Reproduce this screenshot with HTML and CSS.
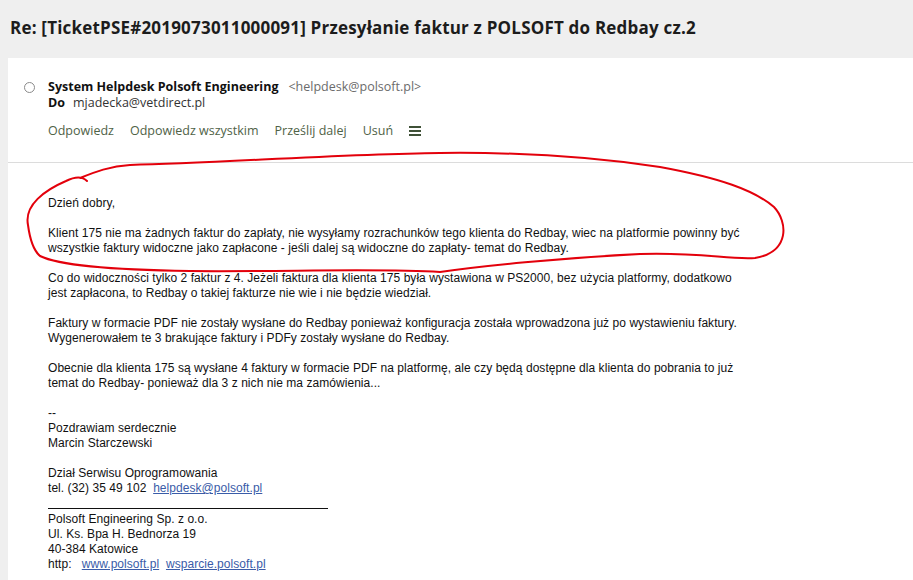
FILE: index.html
```html
<!DOCTYPE html>
<html lang="pl">
<head>
    <meta charset="UTF-8">
    <title>Przesyłanie faktur z POLSOFT do Redbay cz.2</title>
    <link rel="stylesheet" href="styles.css">
</head>
<body>
    <div class="subject">Re: [TicketPSE#2019073011000091] Przesyłanie faktur z POLSOFT do Redbay cz.2</div>

    <div class="message">
        <div class="msg-head">
            <div class="sender">
                <span class="radio"></span>
                <div class="sender-info">
                    <div class="from"><b>System Helpdesk Polsoft Engineering</b><span class="addr">&lt;helpdesk@polsoft.pl&gt;</span></div>
                    <div class="to"><b>Do</b><span>mjadecka@vetdirect.pl</span></div>
                </div>
            </div>
            <div class="actions">
                <a>Odpowiedz</a>
                <a>Odpowiedz wszystkim</a>
                <a>Prześlij dalej</a>
                <a>Usuń</a>
                <span class="menu"><i></i><i></i><i></i></span>
            </div>
        </div>

        <div class="msg-body">
            <p>Dzień dobry,</p>
            <p>Klient 175 nie ma żadnych faktur do zapłaty, nie wysyłamy rozrachunków tego klienta do Redbay, wiec na platformie powinny być<br>wszystkie faktury widoczne jako zapłacone - jeśli dalej są widoczne do zapłaty- temat do Redbay.</p>
            <p>Co do widoczności tylko 2 faktur z 4. Jeżeli faktura dla klienta 175 była wystawiona w PS2000, bez użycia platformy, dodatkowo<br>jest zapłacona, to Redbay o takiej fakturze nie wie i nie będzie wiedział.</p>
            <p>Faktury w formacie PDF nie zostały wysłane do Redbay ponieważ konfiguracja została wprowadzona już po wystawieniu faktury.<br>Wygenerowałem te 3 brakujące faktury i PDFy zostały wysłane do Redbay.</p>
            <p>Obecnie dla klienta 175 są wysłane 4 faktury w formacie PDF na platformę, ale czy będą dostępne dla klienta do pobrania to już<br>temat do Redbay- ponieważ dla 3 z nich nie ma zamówienia...</p>

            <div class="signature">
                <p>--<br>Pozdrawiam serdecznie<br>Marcin Starczewski</p>
                <p>Dział Serwisu Oprogramowania<br>tel. (32) 35 49 102&nbsp; <a>helpdesk@polsoft.pl</a></p>
                <div class="sig-rule"></div>
                <p>Polsoft Engineering Sp. z o.o.<br>Ul. Ks. Bpa H. Bednorza 19<br>40-384 Katowice<br>http:&nbsp;&nbsp; <a>www.polsoft.pl</a>&nbsp; <a>wsparcie.polsoft.pl</a></p>
            </div>
        </div>
    </div>

    <!-- odręczne zaznaczenie na zrzucie -->
    <svg class="scribble" width="913" height="580" viewBox="0 0 913 580">
        <path d="M87 181 Q80 174 66 181
                 C45 190 24 205 28 225
                 C30 240 33 250 40 256
                 C60 266 120 270 190 271
                 C280 272 380 268 440 272
                 C480 266 560 258 640 254
                 C700 252 730 260 755 258
                 C790 252 788 222 774 207
                 C754 190 720 178 660 167
                 C600 158 520 152 440 153
                 C340 154 220 163 130 165
                 C110 166 95 172 80 178"
              fill="none" stroke="#e3000b" stroke-width="2" stroke-linecap="round"/>
    </svg>
</body>
</html>
```

FILE: styles.css
```css
* {
    box-sizing: border-box;
}

body {
    margin: 0;
    padding: 0;
    background-color: #efefef;
    position: relative;
    height: 580px;
    overflow: hidden;
}

.subject {
    height: 58px;
    padding: 17px 0 0 10px;
    font-family: 'Open Sans', sans-serif;
    font-weight: 700;
    font-size: 17px;
    line-height: 22px;
    letter-spacing: 0.2px;
    color: #1c1c1c;
}

.message {
    margin-left: 8px;
    background: #ffffff;
    height: 522px;
}

.msg-head {
    padding: 21px 0 0 16px;
    height: 105px;
    border-bottom: 1px solid #dcdcdc;
    font-family: 'Open Sans', sans-serif;
    font-size: 12.5px;
}

.sender {
    display: flex;
    align-items: flex-start;
}

.radio {
    width: 11px;
    height: 11px;
    border: 1px solid #8a8a8a;
    border-radius: 50%;
    margin-top: 3px;
}

.sender-info {
    margin-left: 13px;
    line-height: 16px;
}

.from b,
.to b {
    color: #111;
    font-weight: 700;
}

.from .addr {
    margin-left: 10px;
    color: #6b6b6b;
}

.to span {
    margin-left: 8px;
    color: #333;
}

.actions {
    display: flex;
    align-items: center;
    gap: 16px;
    margin: 11px 0 0 24px;
    line-height: 17px;
    color: #4f6247;
}

.menu {
    display: flex;
    flex-direction: column;
    gap: 2px;
    width: 12px;
}

.menu i {
    display: block;
    height: 2px;
    background: #3f5137;
}

.msg-body {
    padding: 33px 0 0 40px;
    font-family: 'Liberation Sans', Arial, sans-serif;
    font-size: 12px;
    line-height: 15px;
    letter-spacing: 0.05px;
    color: #111;
}

.msg-body p {
    margin: 0 0 15px 0;
}

.signature a {
    color: #3a5ca8;
    text-decoration: underline;
}

.sig-rule {
    width: 280px;
    height: 1px;
    background: #111;
    margin: -3px 0 3px 0;
}

.scribble {
    position: absolute;
    left: 0;
    top: 0;
    pointer-events: none;
}
```
